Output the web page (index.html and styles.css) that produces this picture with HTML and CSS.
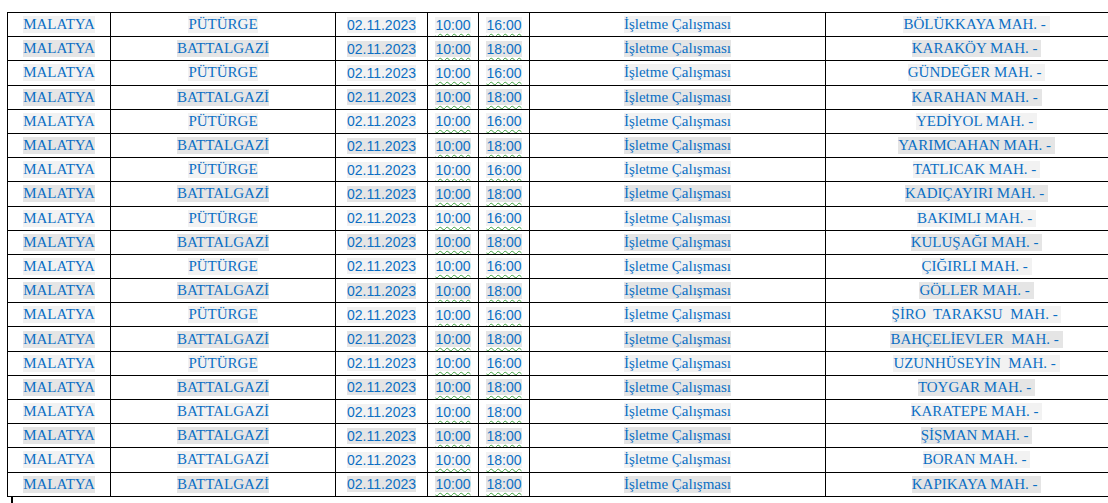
FILE: index.html
```html
<!DOCTYPE html>
<html lang="tr">
<head>
<meta charset="utf-8">
<link rel="stylesheet" href="styles.css">
</head>
<body>
<div class="page">
  <div class="sheet">
    <div class="row odd"><div class="c"><span>MALATYA</span></div><div class="c"><span>PÜTÜRGE</span></div><div class="c d"><span>02.11.2023</span></div><div class="c d"><span class="w">10:00</span></div><div class="c d"><span class="w">16:00</span></div><div class="c"><span>İşletme Çalışması</span></div><div class="c"><span>BÖLÜKKAYA MAH. - </span></div></div>
    <div class="row even"><div class="c"><span>MALATYA</span></div><div class="c"><span>BATTALGAZİ</span></div><div class="c d"><span>02.11.2023</span></div><div class="c d"><span class="w">10:00</span></div><div class="c d"><span class="w">18:00</span></div><div class="c"><span>İşletme Çalışması</span></div><div class="c"><span>KARAKÖY MAH. - </span></div></div>
    <div class="row odd"><div class="c"><span>MALATYA</span></div><div class="c"><span>PÜTÜRGE</span></div><div class="c d"><span>02.11.2023</span></div><div class="c d"><span class="w">10:00</span></div><div class="c d"><span class="w">16:00</span></div><div class="c"><span>İşletme Çalışması</span></div><div class="c"><span>GÜNDEĞER MAH. - </span></div></div>
    <div class="row even"><div class="c"><span>MALATYA</span></div><div class="c"><span>BATTALGAZİ</span></div><div class="c d"><span>02.11.2023</span></div><div class="c d"><span class="w">10:00</span></div><div class="c d"><span class="w">18:00</span></div><div class="c"><span>İşletme Çalışması</span></div><div class="c"><span>KARAHAN MAH. - </span></div></div>
    <div class="row odd"><div class="c"><span>MALATYA</span></div><div class="c"><span>PÜTÜRGE</span></div><div class="c d"><span>02.11.2023</span></div><div class="c d"><span class="w">10:00</span></div><div class="c d"><span class="w">16:00</span></div><div class="c"><span>İşletme Çalışması</span></div><div class="c"><span>YEDİYOL MAH. - </span></div></div>
    <div class="row even"><div class="c"><span>MALATYA</span></div><div class="c"><span>BATTALGAZİ</span></div><div class="c d"><span>02.11.2023</span></div><div class="c d"><span class="w">10:00</span></div><div class="c d"><span class="w">18:00</span></div><div class="c"><span>İşletme Çalışması</span></div><div class="c"><span>YARIMCAHAN MAH. - </span></div></div>
    <div class="row odd"><div class="c"><span>MALATYA</span></div><div class="c"><span>PÜTÜRGE</span></div><div class="c d"><span>02.11.2023</span></div><div class="c d"><span class="w">10:00</span></div><div class="c d"><span class="w">16:00</span></div><div class="c"><span>İşletme Çalışması</span></div><div class="c"><span>TATLICAK MAH. - </span></div></div>
    <div class="row even"><div class="c"><span>MALATYA</span></div><div class="c"><span>BATTALGAZİ</span></div><div class="c d"><span>02.11.2023</span></div><div class="c d"><span class="w">10:00</span></div><div class="c d"><span class="w">18:00</span></div><div class="c"><span>İşletme Çalışması</span></div><div class="c"><span>KADIÇAYIRI MAH. - </span></div></div>
    <div class="row odd"><div class="c"><span>MALATYA</span></div><div class="c"><span>PÜTÜRGE</span></div><div class="c d"><span>02.11.2023</span></div><div class="c d"><span class="w">10:00</span></div><div class="c d"><span class="w">16:00</span></div><div class="c"><span>İşletme Çalışması</span></div><div class="c"><span>BAKIMLI MAH. - </span></div></div>
    <div class="row even"><div class="c"><span>MALATYA</span></div><div class="c"><span>BATTALGAZİ</span></div><div class="c d"><span>02.11.2023</span></div><div class="c d"><span class="w">10:00</span></div><div class="c d"><span class="w">18:00</span></div><div class="c"><span>İşletme Çalışması</span></div><div class="c"><span>KULUŞAĞI MAH. - </span></div></div>
    <div class="row odd"><div class="c"><span>MALATYA</span></div><div class="c"><span>PÜTÜRGE</span></div><div class="c d"><span>02.11.2023</span></div><div class="c d"><span class="w">10:00</span></div><div class="c d"><span class="w">16:00</span></div><div class="c"><span>İşletme Çalışması</span></div><div class="c"><span>ÇIĞIRLI MAH. - </span></div></div>
    <div class="row even"><div class="c"><span>MALATYA</span></div><div class="c"><span>BATTALGAZİ</span></div><div class="c d"><span>02.11.2023</span></div><div class="c d"><span class="w">10:00</span></div><div class="c d"><span class="w">18:00</span></div><div class="c"><span>İşletme Çalışması</span></div><div class="c"><span>GÖLLER MAH. - </span></div></div>
    <div class="row odd"><div class="c"><span>MALATYA</span></div><div class="c"><span>PÜTÜRGE</span></div><div class="c d"><span>02.11.2023</span></div><div class="c d"><span class="w">10:00</span></div><div class="c d"><span class="w">16:00</span></div><div class="c"><span>İşletme Çalışması</span></div><div class="c"><span>ŞİRO&nbsp; TARAKSU&nbsp; MAH. - </span></div></div>
    <div class="row even"><div class="c"><span>MALATYA</span></div><div class="c"><span>BATTALGAZİ</span></div><div class="c d"><span>02.11.2023</span></div><div class="c d"><span class="w">10:00</span></div><div class="c d"><span class="w">18:00</span></div><div class="c"><span>İşletme Çalışması</span></div><div class="c"><span>BAHÇELİEVLER&nbsp; MAH. - </span></div></div>
    <div class="row odd"><div class="c"><span>MALATYA</span></div><div class="c"><span>PÜTÜRGE</span></div><div class="c d"><span>02.11.2023</span></div><div class="c d"><span class="w">10:00</span></div><div class="c d"><span class="w">16:00</span></div><div class="c"><span>İşletme Çalışması</span></div><div class="c"><span>UZUNHÜSEYİN&nbsp; MAH. - </span></div></div>
    <div class="row even"><div class="c"><span>MALATYA</span></div><div class="c"><span>BATTALGAZİ</span></div><div class="c d"><span>02.11.2023</span></div><div class="c d"><span class="w">10:00</span></div><div class="c d"><span class="w">18:00</span></div><div class="c"><span>İşletme Çalışması</span></div><div class="c"><span>TOYGAR MAH. - </span></div></div>
    <div class="row odd"><div class="c"><span>MALATYA</span></div><div class="c"><span>BATTALGAZİ</span></div><div class="c d"><span>02.11.2023</span></div><div class="c d"><span class="w">10:00</span></div><div class="c d"><span class="w">18:00</span></div><div class="c"><span>İşletme Çalışması</span></div><div class="c"><span>KARATEPE MAH. - </span></div></div>
    <div class="row even"><div class="c"><span>MALATYA</span></div><div class="c"><span>BATTALGAZİ</span></div><div class="c d"><span>02.11.2023</span></div><div class="c d"><span class="w">10:00</span></div><div class="c d"><span class="w">18:00</span></div><div class="c"><span>İşletme Çalışması</span></div><div class="c"><span>ŞİŞMAN MAH. - </span></div></div>
    <div class="row odd"><div class="c"><span>MALATYA</span></div><div class="c"><span>BATTALGAZİ</span></div><div class="c d"><span>02.11.2023</span></div><div class="c d"><span class="w">10:00</span></div><div class="c d"><span class="w">18:00</span></div><div class="c"><span>İşletme Çalışması</span></div><div class="c"><span>BORAN MAH. - </span></div></div>
    <div class="row even"><div class="c"><span>MALATYA</span></div><div class="c"><span>BATTALGAZİ</span></div><div class="c d"><span>02.11.2023</span></div><div class="c d"><span class="w">10:00</span></div><div class="c d"><span class="w">18:00</span></div><div class="c"><span>İşletme Çalışması</span></div><div class="c"><span>KAPIKAYA MAH. - </span></div></div>
  </div>
  <div class="caret"></div>
</div>
</body>
</html>
```

FILE: styles.css
```css
html, body {
  margin: 0;
  padding: 0;
  background: #ffffff;
}

body {
  width: 1108px;
  height: 503px;
  overflow: hidden;
}

.page {
  padding: 12px 0 0 7px;
  width: 1130px;
}

.sheet {
  border-top: 1px solid #000;
  border-left: 1px solid #000;
  width: 1121px;
}

.row {
  display: grid;
  grid-template-columns: 103px 225px 92px 51px 51px 296px 302px;
  height: 24.2px;
  box-sizing: border-box;
  border-bottom: 1px solid #000;
}

.c {
  display: flex;
  align-items: center;
  justify-content: center;
  border-right: 1px solid #000;
  font-family: "Liberation Serif", "Times New Roman", serif;
  font-size: 15px;
  color: #0b6fc4;
  white-space: pre;
  overflow: hidden;
}

.c.d {
  font-family: "Liberation Sans", Arial, sans-serif;
  font-size: 14px;
}

.odd span {
  background: #f2f2f2;
}

.even span {
  background: #e5e5e5;
}

.w {
  text-decoration: underline wavy #3f9f3f;
  text-decoration-thickness: 1px;
  text-underline-offset: 3px;
}

.caret {
  width: 2px;
  height: 8px;
  margin-left: 4px;
  background: #000;
}
```
